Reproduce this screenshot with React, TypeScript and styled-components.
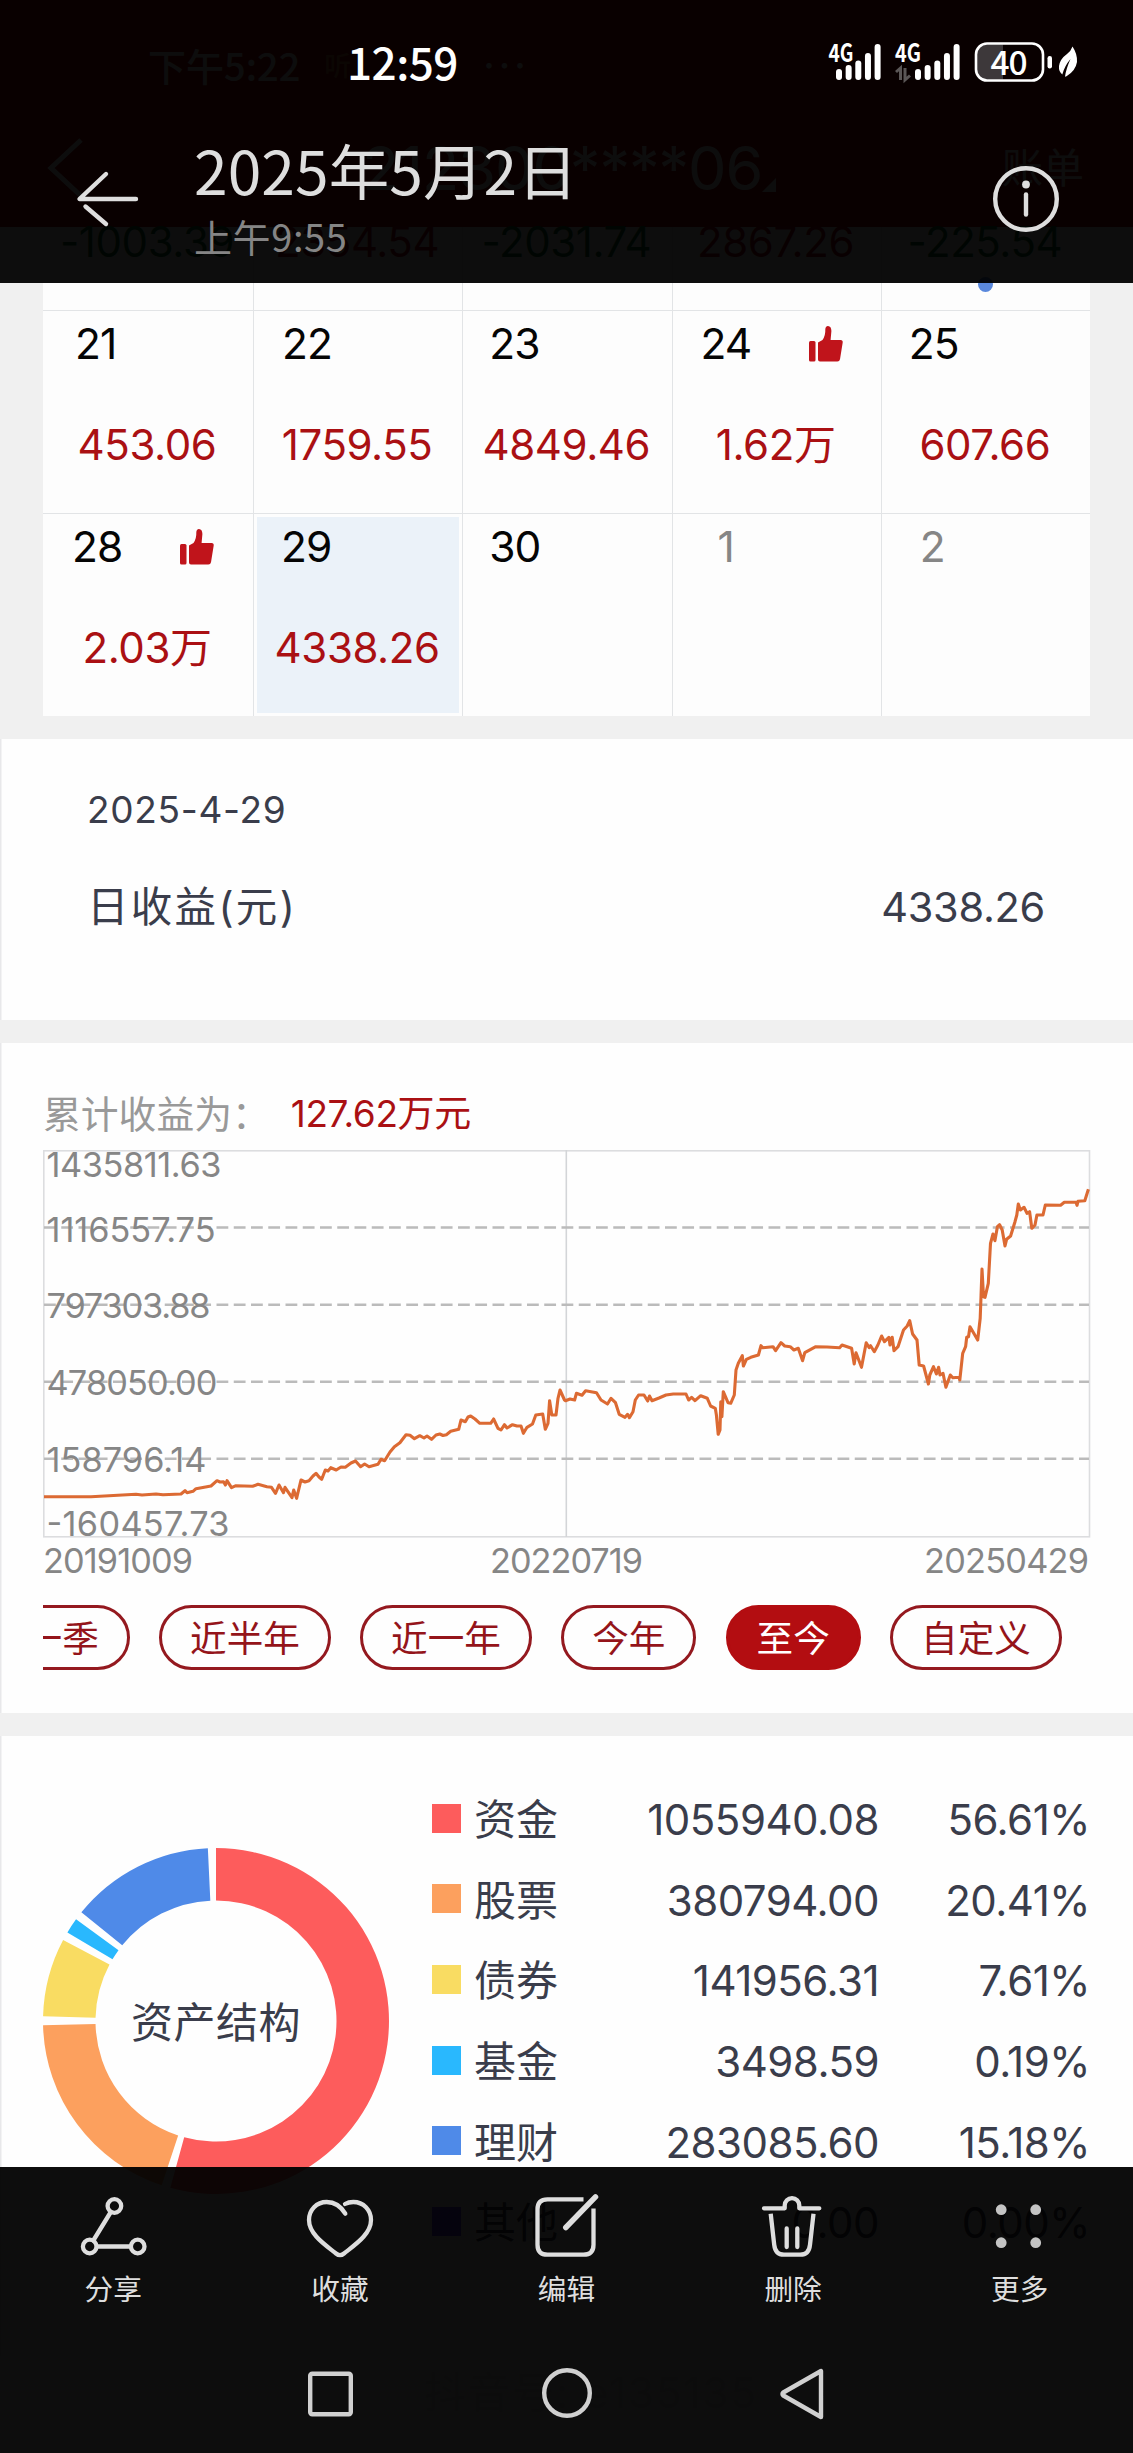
import React from "react";
import styled, { createGlobalStyle, css } from "styled-components";

const UI = `Inter, "Noto Sans CJK SC", sans-serif`;
const SYSTEM = `"Noto Sans CJK SC", "Noto Sans", sans-serif`;

const INK = "#3a3d4b";
const RED = "#aa1013";
const LINE = "#e2e4e6";

const GlobalStyle = createGlobalStyle`
  * { box-sizing: border-box; }
  body { margin: 0; background: #0d0d0d; }
`;

/* ---------- shell ---------- */

const Screen = styled.div`
  position: relative;
  width: 1133px;
  height: 2453px;
  overflow: hidden;
  background: #fefefe;
  font-family: ${UI};
  color: ${INK};
`;

const Content = styled.main`
  display: flex;
  flex-direction: column;
`;

const Scrim = styled.div<{ $edge: "top" | "bottom"; $height: number }>`
  position: absolute;
  left: 0;
  right: 0;
  ${(p) => p.$edge}: 0;
  height: ${(p) => p.$height}px;
  background: rgba(0, 0, 0, 0.95);
  font-family: ${SYSTEM};
  display: flex;
  flex-direction: column;
`;

/* ---------- app bar behind the viewer header ---------- */

const AppBar = styled.header`
  height: 227px;
  background: #a80508;
  color: #fff;
`;

const AppStatus = styled.div`
  height: 132px;
  padding: 0 0 3px 148px;
  display: flex;
  align-items: center;
  font: 500 38px/40px ${SYSTEM};
`;

const AppBadge = styled.span`
  margin-left: 24px;
  font-size: 27px;
  color: #d8733a;
`;

const AppMore = styled.span`
  margin-left: 132px;
  font-family: ${UI};
  letter-spacing: 4px;
`;

const AppTitleRow = styled.div`
  height: 72px;
  padding: 0 49px 0 46px;
  display: flex;
  align-items: center;
`;

const AppAccount = styled.span`
  margin-left: 278px;
  font-size: 61px;
  line-height: 72px;
  letter-spacing: -1px;
`;

const AppBill = styled.span`
  margin-left: auto;
  font-size: 41px;
  line-height: 72px;
`;

/* ---------- calendar ---------- */

const CalendarArea = styled.section`
  height: 512px;
  padding: 0 43px;
  background: #f0f0f0;
`;

const Week = styled.div<{ $height: number }>`
  display: grid;
  grid-template-columns: 210px repeat(4, 209.25px);
  height: ${(p) => p.$height}px;
  border-bottom: 1.5px solid ${LINE};
  background: #fdfdfd;
  &:last-child { border-bottom: 0; }
`;

const Cell = styled.div<{ $selected?: boolean }>`
  display: flex;
  flex-direction: column;
  & + & { border-left: 1.5px solid ${LINE}; }
  ${(p) =>
    p.$selected &&
    css`
      background: #ebf2f9;
      box-shadow: inset 0 0 0 3px #fdfdfd;
    `}
`;

const DayLine = styled.div<{ $indent: number }>`
  display: flex;
  align-items: center;
  height: 66px;
  padding-left: ${(p) => p.$indent}px;
`;

const DayNumber = styled.span<{ $muted?: boolean }>`
  width: 108px;
  font-size: 42.5px;
  line-height: 44px;
  letter-spacing: -1px;
  color: ${(p) => (p.$muted ? "#868686" : "#050505")};
`;

const Amount = styled.div<{ $loss?: boolean; $top: number }>`
  margin-top: ${(p) => p.$top}px;
  padding-right: 2px;
  height: 42px;
  font-size: 42px;
  line-height: 42px;
  letter-spacing: -0.4px;
  text-align: center;
  white-space: nowrap;
  color: ${(p) => (p.$loss ? "#0b6b2b" : RED)};
`;

const TodayDot = styled.i`
  align-self: center;
  width: 15px;
  height: 15px;
  margin-top: 14px;
  border-radius: 50%;
  background: #5a88dc;
`;

/* ---------- sections ---------- */

const Section = styled.section<{ $height: number }>`
  height: ${(p) => p.$height}px;
  background: #fefefe;
  box-shadow: inset 1.5px 0 #e8e8ea;
`;

const Divider = styled.div`
  height: 23px;
  flex: none;
  background: #f0f0f0;
`;

const DayDetail = styled(Section)`
  padding: 46.5px 88px 0 87px;
`;

const DetailDate = styled.div`
  height: 47px;
  font-size: 37px;
  line-height: 47px;
  letter-spacing: 0.7px;
`;

const DetailRow = styled.div`
  display: flex;
  justify-content: space-between;
  margin-top: 52px;
  font-size: 41.5px;
  line-height: 44px;
`;

const DetailLabel = styled.span`
  letter-spacing: 2.3px;
`;

const DetailValue = styled.span`
  letter-spacing: -0.3px;
`;

/* ---------- earnings ---------- */

const Earnings = styled(Section)`
  padding: 48.5px 43px 0;
`;

const EarningsHead = styled.div`
  display: flex;
  align-items: center;
  height: 44px;
  font-size: 37.8px;
  line-height: 44px;
  color: #999;
`;

const EarningsTotal = styled.strong`
  margin-left: 21px;
  font-size: 37px;
  font-weight: 400;
  letter-spacing: -0.4px;
  color: ${RED};
`;

const ChartSvg = styled.svg`
  display: block;
  margin-top: 14.5px;
  width: 1048px;
  height: 434px;
  overflow: visible;
  font-family: ${UI};
`;

const Pills = styled.div`
  display: flex;
  gap: 29.3px;
  width: 1047px;
  height: 65px;
  margin-top: 21px;
  overflow: hidden;
`;

const Pill = styled.button<{ $active?: boolean; $clipped?: boolean }>`
  flex: none;
  height: 65px;
  padding: 3px 28px 0;
  margin: 0 0 0 ${(p) => (p.$clipped ? "-85px" : "0")};
  border: 3px solid ${(p) => (p.$active ? "#b30d11" : "#94191f")};
  border-radius: 33px;
  background: ${(p) => (p.$active ? "#b30d11" : "transparent")};
  color: ${(p) => (p.$active ? "#fff" : "#94141a")};
  font: 400 36.6px/56px ${UI};
  white-space: nowrap;
`;

/* ---------- assets ---------- */

const Assets = styled(Section)`
  display: flex;
  flex: none;
  padding: 42px 43px 0;
`;

const DonutWrap = styled.div`
  position: relative;
  width: 346px;
  height: 346px;
  margin-top: 69.5px;
`;

const DonutLabel = styled.span`
  position: absolute;
  inset: 0;
  display: flex;
  align-items: center;
  justify-content: center;
  padding-bottom: 3px;
  font-size: 42px;
  letter-spacing: 0.5px;
`;

const Legend = styled.div`
  margin-left: 43px;
`;

const LegendRow = styled.div`
  display: grid;
  grid-template-columns: 43px 130px 274px 211px;
  align-items: center;
  height: 80.6px;
  font-size: 42px;
  line-height: 50px;
`;

const Swatch = styled.i<{ $color: string }>`
  width: 29px;
  height: 29px;
  background: ${(p) => p.$color};
`;

const LegendName = styled.span`
  padding-top: 4px;
  margin-left: -1px;
`;

const Figure = styled.span`
  padding-top: 4px;
  text-align: right;
  letter-spacing: -0.5px;
`;

const Watermark = styled.div`
  padding-left: 424px;
  font-size: 42px;
  line-height: 74px;
  letter-spacing: 2px;
  color: #e2e2e2;
`;

/* ---------- viewer header ---------- */

const StatusBar = styled.div`
  display: flex;
  height: 132px;
  padding: 0 54px 0 347px;
  align-items: center;
  justify-content: space-between;
  color: #fff;
`;

const Clock = styled.span`
  margin-top: -10px;
  font-size: 44px;
  font-weight: 500;
  line-height: 50px;
  letter-spacing: -0.5px;
`;

const StatusIcons = styled.svg`
  width: 252px;
  height: 44px;
  margin-top: -9px;
  font-family: ${SYSTEM};
`;

const TitleBar = styled.div`
  display: flex;
  height: 151px;
  padding: 0 73px 0 75px;
`;

const BackIcon = styled.svg`
  width: 66px;
  height: 60px;
  margin-top: 37px;
`;

const TitleText = styled.div`
  flex: 1;
  padding-left: 53px;
`;

const Title = styled.h1`
  margin: 0;
  padding-top: 5px;
  font-size: 60.5px;
  font-weight: 400;
  line-height: 64px;
  letter-spacing: 0.1px;
  color: #dedede;
`;

const Subtitle = styled.div`
  margin-top: 15px;
  font-size: 38px;
  line-height: 40px;
  letter-spacing: 0.6px;
  color: #858585;
`;

const InfoIcon = styled.svg`
  width: 68px;
  height: 68px;
  margin-top: 33px;
`;

/* ---------- viewer footer ---------- */

const Tools = styled.nav`
  display: grid;
  grid-template-columns: repeat(5, 1fr);
  padding-top: 23px;
  height: 180px;
`;

const Tool = styled.div`
  display: flex;
  flex-direction: column;
  align-items: center;
`;

const ToolIcon = styled.svg`
  width: 72px;
  height: 72px;
  fill: none;
  stroke: #dedede;
  stroke-width: 4.3;
  stroke-linecap: round;
  stroke-linejoin: round;
`;

const ToolLabel = styled.span`
  margin-top: 9px;
  font-size: 28.7px;
  line-height: 34px;
  color: #dedede;
`;

const SystemNav = styled.div`
  display: flex;
  justify-content: center;
  gap: 182px;
  padding-top: 17px;
`;

const SystemIcon = styled.svg`
  width: 54px;
  height: 60px;
  fill: none;
  stroke: #d0d0d0;
  stroke-width: 4.4;
  stroke-linejoin: round;
`;

/* ---------- data ---------- */

type Day = { day: string; amount?: string; liked?: boolean; muted?: boolean; selected?: boolean; indent: number };

const previousWeek = ["-1003.39", "2354.54", "-2031.74", "2867.26", "-225.54"];

const weeks: Day[][] = [
  [
    { day: "21", amount: "453.06", indent: 32 },
    { day: "22", amount: "1759.55", indent: 28 },
    { day: "23", amount: "4849.46", indent: 26 },
    { day: "24", amount: "1.62万", liked: true, indent: 28 },
    { day: "25", amount: "607.66", indent: 27 },
  ],
  [
    { day: "28", amount: "2.03万", liked: true, indent: 29 },
    { day: "29", amount: "4338.26", selected: true, indent: 27 },
    { day: "30", indent: 26 },
    { day: "1", muted: true, indent: 45 },
    { day: "2", muted: true, indent: 38 },
  ],
];

const axisLabels = [
  { text: "1435811.63", y: 27, width: 175 },
  { text: "1116557.75", y: 91.5, width: 169 },
  { text: "797303.88", y: 167.5, width: 164 },
  { text: "478050.00", y: 245, width: 171 },
  { text: "158796.14", y: 322, width: 160 },
  { text: "-160457.73", y: 386, width: 183 },
];

const gridLines = [77.5, 154.7, 231.7, 308.7];

const earnings =
  "1,346.7 48,346.7 66,345.7 93,344.3 99,345 113,344 120,344.7 138,344 142,340.7 144,342.7 150,341.3 153,338.7 168,336 174,330.7 177,332 180.5,331.7 182.4,335 184,330.7 188.5,337.7 193,335.7 209.6,336.3 215,334.3 224,336.7 228.5,337.3 232.5,343.3 236,335 240.5,342.7 242,337.3 249,347.7 250.7,340 253.6,348.3 258,330 262,332 266,330.7 270,326 273,323.3 276,327 278.7,329.3 282.3,320 285,321 287.8,317.7 293.2,320 298,317 302.3,317.3 308,313 312.5,311 317.6,316.7 321.6,314 326,316.7 335,314.3 338,309.3 341.6,310.7 347,302 351.4,296.7 356.9,292.7 363,284.7 367,285.3 371.4,288.7 376.8,285.7 381,288 384,286 388.5,289.3 393,285 396.8,284 400,285.5 403.4,284.7 407.7,281.3 415.7,279.3 418,270 422.3,271.7 425,267 427.7,266 432,269 436.8,273.3 447.7,273.3 450.6,269 455,278.3 458,280 461.5,274.7 464,278 469.5,274.7 474,276 478,276 480.4,283.3 484,277.3 489.5,274 492.8,265 499.7,264 502.3,279.3 505,273.3 506.6,250.7 508.8,265 513,265 515,248.3 517,240 521.5,250 522.5,250.7 527,249 531.6,250 533.4,243.3 539,245.3 542.6,240.7 553.5,242.7 558,250 564.5,254 568,248.3 572.5,252.7 576.2,264.3 582,267.3 584.6,264.3 586.4,267.7 590,261.7 592.3,250 595.6,245 601,245 604.7,251 606.5,246 609,250.7 616,248 623,245 630.3,244 643,244 645.6,250 648.6,247.3 652,250.7 657.7,245.7 664.3,248.3 667.6,256 672.3,258.3 673.4,265 675.2,284.3 677,280 677.8,251.7 678.9,266.7 680.3,241.7 685,252.7 687.7,253.3 691.3,245 693,220 695.3,213.3 699.3,205.7 700.4,216 703.4,209.3 707.8,207.3 715.4,205 718,195.7 719.8,197.7 730,196.7 732.6,200.7 738,192.7 741.7,196 747.2,196.7 750.9,200 755.3,198.3 759.6,210.7 761.8,202.7 772.8,196.7 784,197 796.6,197.7 799,195 808.6,198.3 811.2,214 813,202.7 818.5,217.3 823.2,192.7 826.2,197.7 827.6,195.7 831.3,201.7 834.9,195 838.6,186 841.5,191.7 845.9,187.3 847,195 849.2,187.3 851,200.7 855,196.7 860.5,180 864.2,176 866.7,170.7 869.6,184 874,190 876.2,215 880.6,216 885.4,234 886.8,225 890.5,216.7 893.4,224 895.6,217.3 897,225 900,223.3 902.9,237.3 907.3,225 909.8,227.7 916,227.3 916.8,230 919.7,203.3 922.6,196.7 923.7,187.3 925.5,186.7 927,176.7 931.8,185 934.7,190 937.2,168.3 938,146.7 939,119 940.5,146.7 942,147.3 945.3,133.3 947.5,93.3 950,84 951.9,90.7 954.4,76.7 956.6,74.7 959.2,80 962,96 963.6,89.3 967.6,86 972,71.7 973.8,65 975.3,54 977.4,60 981,57.3 984,63.3 986.6,61.7 988.8,78.3 992,75 993.9,65 1000,65 1002.3,55 1017.6,55.3 1021.3,52.3 1033,52.3 1034,55.3 1035,51.3 1041.8,50.7 1045.4,39.3";

const assets = [
  { name: "资金", amount: "1055940.08", share: "56.61%", color: "#fd5c5c" },
  { name: "股票", amount: "380794.00", share: "20.41%", color: "#fca05e" },
  { name: "债券", amount: "141956.31", share: "7.61%", color: "#f9dc62" },
  { name: "基金", amount: "3498.59", share: "0.19%", color: "#29b8fe" },
  { name: "理财", amount: "283085.60", share: "15.18%", color: "#4f8ae8" },
  { name: "其他", amount: "0.00", share: "0.00%", color: "#6a3cf5" },
];

const slices = [
  { from: 0, to: 195.3, color: "#fd5c5c" },
  { from: 198.3, to: 268.6, color: "#fca05e" },
  { from: 271.6, to: 297.9, color: "#f9dc62" },
  { from: 300.8, to: 306, color: "#29b8fe" },
  { from: 308.9, to: 357.3, color: "#4f8ae8" },
];

function slicePath(from: number, to: number) {
  const point = (angle: number, r: number) => {
    const t = (angle * Math.PI) / 180;
    return `${(173 + r * Math.sin(t)).toFixed(2)} ${(173 - r * Math.cos(t)).toFixed(2)}`;
  };
  const large = to - from > 180 ? 1 : 0;
  return `M${point(from, 173)}A173 173 0 ${large} 1 ${point(to, 173)}L${point(to, 120.5)}A120.5 120.5 0 ${large} 0 ${point(from, 120.5)}Z`;
}

/* ---------- pieces ---------- */

const Thumb = () => (
  <svg width="34" height="36" viewBox="0 0 34 36" fill="#c0141b">
    <rect x="0" y="15" width="6.5" height="20.5" rx="1.5" />
    <path d="M9 33.5V16.5L13.5 14Q16.6 9.5 16.3 3.5Q16.4 0 19 0Q22.3.2 22.4 5L21.6 14H31.6Q34 14.2 33.7 16.6L31 33.2Q30.5 35.5 28.4 35.5H11Q9 35.4 9 33.5Z" />
  </svg>
);

const bars = [11, 15, 19.5, 27, 36];

const Signal = ({ x }: { x: number }) => (
  <g fill="#fff">
    {bars.map((h, i) => (
      <rect key={h} x={x + i * 9.65} y={40 - h} width="6" height={h} rx="3" />
    ))}
  </g>
);

function EarningsChart() {
  return (
    <ChartSvg viewBox="0 0 1048 434">
      <g fill="none" stroke="#dcdddf" strokeWidth="1.6">
        <rect x="0.8" y="0.8" width="1045.7" height="386" />
        <path d="M523.3 0V387" stroke="#d3d5d8" />
      </g>
      <g stroke="#bbb" strokeWidth="2.6" strokeDasharray="11.8 5.45">
        {gridLines.map((y) => (
          <line key={y} x1="1" x2="1046" y1={y} y2={y} />
        ))}
      </g>
      <g fill="#868686" fontSize="34.3">
        {axisLabels.map((l) => (
          <text key={l.text} x="3.5" y={l.y} textLength={l.width}>{l.text}</text>
        ))}
        <text x="0" y="422.7" textLength="150">20191009</text>
        <text x="447" y="422.7" textLength="153">20220719</text>
        <text x="881" y="422.7" textLength="165">20250429</text>
      </g>
      <polyline points={earnings} fill="none" stroke="#dc6a33" strokeWidth="3.1" strokeLinejoin="round" />
    </ChartSvg>
  );
}

function ViewerHeader() {
  return (
    <Scrim $edge="top" $height={283}>
      <StatusBar>
        <Clock>12:59</Clock>
        <StatusIcons viewBox="0 0 252 44">
          <text x="1.5" y="22" fontSize="25" fontWeight="700" fill="#fff" textLength="25" lengthAdjust="spacingAndGlyphs">4G</text>
          <Signal x={9} />
          <text x="68" y="22" fontSize="25" fontWeight="700" fill="#fff" textLength="26" lengthAdjust="spacingAndGlyphs">4G</text>
          <path d="M69 32L73.5 28V40M78 28V40L83 35.5" fill="none" stroke="#5a5656" strokeWidth="3" />
          <Signal x={88} />
          <path d="M159 4.5H176V39.5H159Q149.5 39.5 149.5 30V14Q149.5 4.5 159 4.5Z" fill="#3d383a" />
          <rect x="149" y="3.5" width="67" height="37" rx="11" fill="none" stroke="#fff" strokeWidth="2.6" />
          <text x="163.5" y="34.5" fontSize="33.5" fontWeight="500" fill="#fff" textLength="37">40</text>
          <rect x="220.5" y="16" width="4.5" height="12.5" rx="2.2" fill="#fff" />
          <path d="M245.5 6.5Q250.5 14 250 22Q248.5 31 239.5 36.2L238 36.7Q239 29 243.5 19Q237.5 26 235.3 34.5Q231.5 31.5 232 26Q233 19 240 14Q244 11 245.5 6.5Z" fill="#fff" />
        </StatusIcons>
      </StatusBar>
      <TitleBar>
        <BackIcon viewBox="0 0 66 60" fill="none" stroke="#dedede" strokeWidth="4.4" strokeLinecap="round">
          <path d="M31 5L4.5 30H61M10.5 37.5L31 55" strokeLinejoin="round" />
        </BackIcon>
        <TitleText>
          <Title>2025年5月2日</Title>
          <Subtitle>上午9:55</Subtitle>
        </TitleText>
        <InfoIcon viewBox="0 0 68 68" fill="none" stroke="#dedede" strokeWidth="4.4" strokeLinecap="round">
          <circle cx="34" cy="34" r="30.8" />
          <path d="M34 29.5V49.5" />
          <circle cx="34" cy="19.5" r="3.9" fill="#dedede" stroke="none" />
        </InfoIcon>
      </TitleBar>
    </Scrim>
  );
}

const tools = [
  {
    label: "分享",
    icon: (
      <>
        <circle cx="37.4" cy="16" r="6.8" />
        <circle cx="12.7" cy="56.5" r="6.8" />
        <circle cx="60.7" cy="56.5" r="6.8" />
        <path d="M33.8 22L16.3 50.5M20 56.5H53.5" />
      </>
    ),
  },
  {
    label: "收藏",
    icon: (
      <path d="M41.3 23.7C37 16.5 30.5 12 22.7 12C12.5 12 5 20 5 30C5 45 23 56 32 63.5Q36 66.8 40 63.5C49 56 67 45 67 30C67 20 59.5 12 49.3 12Q44.5 12 41 14" />
    ),
  },
  {
    label: "编辑",
    icon: (
      <>
        <path d="M53.5 9.3H17.5Q7.5 9.3 7.5 19.3V54.7Q7.5 64.7 17.5 64.7H53.5Q63.5 64.7 63.5 54.7V18.5" strokeLinecap="butt" />
        <path d="M35.8 37.5L65.5 6.9" strokeWidth="5.5" />
      </>
    ),
  },
  {
    label: "删除",
    icon: (
      <>
        <path d="M7 18.3H27.7V15.5A7.3 7.3 0 0 1 42.3 15.5V18.3H62.3" />
        <path d="M13.7 23.7L17.2 54.7Q18.3 64.7 27 64.7H43.2Q52 64.7 53 54.7L56.5 23.7" strokeLinecap="butt" />
        <path d="M29.7 38.5V57M40.3 38.5V57" />
      </>
    ),
  },
  {
    label: "更多",
    icon: (
      <g fill="#c4c4c4" stroke="none">
        <circle cx="17.2" cy="19.7" r="5.4" />
        <circle cx="51.7" cy="19.7" r="5.4" />
        <circle cx="17.2" cy="52.7" r="5.4" />
        <circle cx="51.7" cy="52.7" r="5.4" />
      </g>
    ),
  },
];

function ViewerFooter() {
  return (
    <Scrim $edge="bottom" $height={286}>
      <Tools>
        {tools.map((t) => (
          <Tool key={t.label}>
            <ToolIcon viewBox="0 0 72 72">{t.icon}</ToolIcon>
            <ToolLabel>{t.label}</ToolLabel>
          </Tool>
        ))}
      </Tools>
      <SystemNav>
        <SystemIcon viewBox="0 0 54 60"><rect x="6.2" y="9.7" width="40.6" height="40.6" rx="2" /></SystemIcon>
        <SystemIcon viewBox="0 0 54 60"><circle cx="27" cy="29" r="22.8" /></SystemIcon>
        <SystemIcon viewBox="0 0 54 60"><path d="M45 7V53L7.3 31.5Q5.6 30 7.3 28.5Z" /></SystemIcon>
      </SystemNav>
    </Scrim>
  );
}

export default function App() {
  return (
    <Screen>
      <GlobalStyle />
      <Content>
        <AppBar>
          <AppStatus>
            <span>下午5:22</span>
            <AppBadge>听</AppBadge>
            <AppMore>···</AppMore>
          </AppStatus>
          <AppTitleRow>
            <svg width="38" height="64" viewBox="0 0 38 64" fill="none" stroke="#fff" strokeWidth="5">
              <path d="M35 4L5 32L35 60" />
            </svg>
            <AppAccount>212300****06</AppAccount>
            <svg width="16" height="48" viewBox="0 0 16 48" fill="#fff"><path d="M14 34V48H0Z" /></svg>
            <AppBill>账单</AppBill>
          </AppTitleRow>
        </AppBar>

        <CalendarArea>
          <Week $height={84}>
            {previousWeek.map((a, i) => (
              <Cell key={a}>
                <Amount $top={-6} $loss={a.startsWith("-")}>{a}</Amount>
                {i === 4 && <TodayDot />}
              </Cell>
            ))}
          </Week>
          {weeks.map((week, i) => (
            <Week key={i} $height={i === 0 ? 203 : 202}>
              {week.map((d) => (
                <Cell key={d.day} $selected={d.selected}>
                  <DayLine $indent={d.indent}>
                    <DayNumber $muted={d.muted}>{d.day}</DayNumber>
                    {d.liked && <Thumb />}
                  </DayLine>
                  {d.amount && <Amount $top={47}>{d.amount}</Amount>}
                </Cell>
              ))}
            </Week>
          ))}
        </CalendarArea>

        <DayDetail $height={281}>
          <DetailDate>2025-4-29</DetailDate>
          <DetailRow>
            <DetailLabel>日收益(元)</DetailLabel>
            <DetailValue>4338.26</DetailValue>
          </DetailRow>
        </DayDetail>
        <Divider />

        <Earnings $height={670}>
          <EarningsHead>
            <span>累计收益为：</span>
            <EarningsTotal>127.62万元</EarningsTotal>
          </EarningsHead>
          <EarningsChart />
          <Pills>
            <Pill $clipped>近一季</Pill>
            <Pill>近半年</Pill>
            <Pill>近一年</Pill>
            <Pill>今年</Pill>
            <Pill $active>至今</Pill>
            <Pill>自定义</Pill>
          </Pills>
        </Earnings>
        <Divider />

        <Assets $height={620}>
          <DonutWrap>
            <svg width="346" height="346" viewBox="0 0 346 346">
              {slices.map((s) => (
                <path key={s.color} d={slicePath(s.from, s.to)} fill={s.color} />
              ))}
            </svg>
            <DonutLabel>资产结构</DonutLabel>
          </DonutWrap>
          <Legend>
            {assets.map((a) => (
              <LegendRow key={a.name}>
                <Swatch $color={a.color} />
                <LegendName>{a.name}</LegendName>
                <Figure>{a.amount}</Figure>
                <Figure>{a.share}</Figure>
              </LegendRow>
            ))}
          </Legend>
        </Assets>
        <Watermark>抖音号: e135135</Watermark>
      </Content>
      <ViewerHeader />
      <ViewerFooter />
    </Screen>
  );
}
